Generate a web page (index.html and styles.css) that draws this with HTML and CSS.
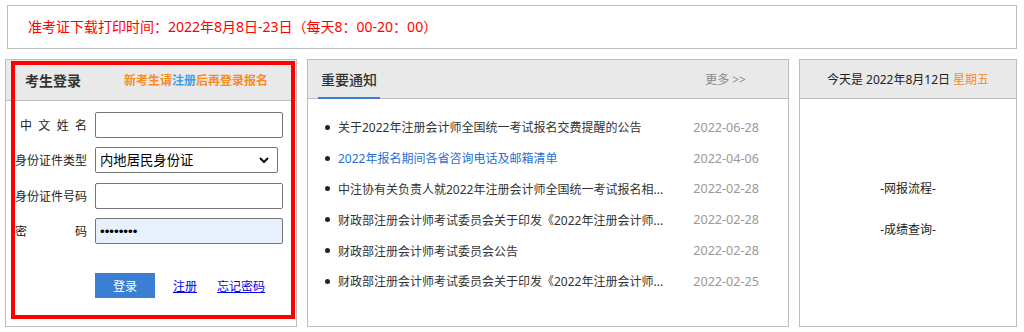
FILE: index.html
```html
<!DOCTYPE html>
<html lang="zh-CN">
<head>
<meta charset="utf-8">
<title>考生登录</title>
<link rel="stylesheet" href="styles.css">
</head>
<body>
<div class="page">
  <div class="notice-bar">准考证下载打印时间：2022年8月8日-23日（每天8：00-20：00）</div>
  <div class="panels">
    <div class="panel panel-login">
      <div class="login-head">
        <span class="login-title">考生登录</span>
        <span class="login-tip">新考生请<a class="tip-link" href="#">注册</a>后再登录报名</span>
      </div>
      <form class="login-form">
        <div class="form-row">
          <label class="form-label label-name">中文姓名</label>
          <input class="form-input" type="text">
        </div>
        <div class="form-row">
          <label class="form-label">身份证件类型</label>
          <div class="select-wrap">
            <select class="form-select"><option>内地居民身份证</option></select>
            <svg class="select-arrow" width="10" height="7" viewBox="0 0 10 7"><polyline points="1,1 5,5 9,1" fill="none" stroke="#111" stroke-width="2"/></svg>
          </div>
        </div>
        <div class="form-row">
          <label class="form-label">身份证件号码</label>
          <input class="form-input" type="text">
        </div>
        <div class="form-row">
          <label class="form-label">密码</label>
          <input class="form-input input-pass" type="password" value="12345678">
        </div>
        <div class="form-actions">
          <button class="btn-login" type="button">登录</button>
          <a class="act-link" href="#">注册</a>
          <a class="act-link" href="#">忘记密码</a>
        </div>
      </form>
      <div class="red-frame"></div>
    </div>

    <div class="panel panel-news">
      <div class="news-head">
        <span class="news-title">重要通知</span>
        <a class="news-more" href="#">更多 &gt;&gt;</a>
      </div>
      <ul class="news-list">
        <li class="news-item"><span class="news-text">关于2022年注册会计师全国统一考试报名交费提醒的公告</span><span class="news-date">2022-06-28</span></li>
        <li class="news-item"><span class="news-text news-blue">2022年报名期间各省咨询电话及邮箱清单</span><span class="news-date">2022-04-06</span></li>
        <li class="news-item"><span class="news-text">中注协有关负责人就2022年注册会计师全国统一考试报名相...</span><span class="news-date">2022-02-28</span></li>
        <li class="news-item"><span class="news-text">财政部注册会计师考试委员会关于印发《2022年注册会计师...</span><span class="news-date">2022-02-28</span></li>
        <li class="news-item"><span class="news-text">财政部注册会计师考试委员会公告</span><span class="news-date">2022-02-28</span></li>
        <li class="news-item"><span class="news-text">财政部注册会计师考试委员会关于印发《2022年注册会计师...</span><span class="news-date">2022-02-25</span></li>
      </ul>
    </div>

    <div class="panel panel-side">
      <div class="side-head">今天是 2022年8月12日 <span class="weekday">星期五</span></div>
      <div class="side-body">
        <a class="side-link" href="#">-网报流程-</a>
        <a class="side-link" href="#">-成绩查询-</a>
      </div>
    </div>
  </div>
</div>
</body>
</html>
```

FILE: styles.css
```css
* { box-sizing: border-box; }
html, body { margin: 0; padding: 0; background: #fff; }
body {
  font-family: "Noto Sans", "Noto Sans CJK SC", sans-serif;
  font-size: 12px;
  color: #333;
}
a { text-decoration: none; }

.page { padding: 5px 7px 0 5px; }

.notice-bar {
  margin-left: 2px;
  height: 44px;
  border: 1px solid #bdbdbd;
  padding-left: 20px;
  line-height: 42px;
  font-size: 14px;
  color: #f00;
}

.panels {
  display: flex;
  gap: 10px;
  margin-top: 10px;
}

.panel {
  position: relative;
  height: 268px;
  border: 1px solid #bdbdbd;
  background: #fff;
}
.panel-login { width: 292px; }
.panel-news { width: 482px; }
.panel-side { width: 218px; }

/* login */
.login-head {
  height: 41px;
  background: #e9e9e9;
  border-bottom: 1px solid #bdbdbd;
  display: flex;
  align-items: center;
  justify-content: space-between;
  padding: 0 28px 0 19px;
}
.login-title { font-size: 14px; font-weight: bold; color: #333; }
.login-tip { font-size: 12px; font-weight: bold; color: #ff8a1c; }
.tip-link { color: #3ca0ea; }

.login-form {
  padding: 11px 0 0 9px;
  display: flex;
  flex-direction: column;
  gap: 9.4px;
}
.form-row {
  display: flex;
  align-items: center;
  height: 26px;
  gap: 8px;
}
.form-label {
  width: 72px;
  font-size: 12px;
  color: #222;
  text-align: justify;
  text-align-last: justify;
}
.label-name { padding-left: 5px; }
.form-input {
  width: 188px;
  height: 26px;
  border: 1px solid #767676;
  border-radius: 2px;
  padding: 0 4px;
  font-size: 13.33px;
  background: #fff;
  outline: none;
}
.input-pass { background: #e8f0fe; letter-spacing: 0; }
.select-wrap { position: relative; width: 183px; height: 26px; }
.form-select {
  appearance: none;
  -webkit-appearance: none;
  width: 183px;
  height: 26px;
  border: 1px solid #767676;
  border-radius: 2px;
  padding: 0 20px 0 4px;
  font-family: "Noto Sans", "Noto Sans CJK SC", sans-serif;
  font-size: 13.33px;
  color: #000;
  background: #fff;
}
.select-arrow {
  position: absolute;
  right: 9px;
  top: 10px;
  pointer-events: none;
}

.form-actions {
  display: flex;
  align-items: center;
  margin-top: 19.6px;
  padding-left: 80px;
}
.btn-login {
  width: 60px;
  height: 25px;
  border: none;
  background: #3a7fd3;
  color: #fff;
  font-family: "Noto Sans", "Noto Sans CJK SC", sans-serif;
  font-size: 12px;
  padding: 0;
  margin-right: 18px;
}
.act-link {
  color: #00e;
  text-decoration: underline;
  font-size: 12px;
  margin-right: 20px;
}

.red-frame {
  position: absolute;
  top: 1px;
  left: 5px;
  right: 1px;
  bottom: 7px;
  border: 4px solid #f00;
  pointer-events: none;
}

/* news */
.news-head {
  height: 39px;
  background: #e9e9e9;
  border-bottom: 1px solid #bdbdbd;
  display: flex;
  align-items: stretch;
  justify-content: space-between;
  padding: 0 42px 0 10px;
}
.news-title {
  display: flex;
  align-items: center;
  padding: 0 3px;
  margin-bottom: -1px;
  font-size: 14px;
  font-weight: 500;
  color: #333;
  border-bottom: 2px solid #3a7bd5;
}
.news-more {
  display: flex;
  align-items: center;
  color: #888;
  font-size: 12px;
}
.news-list {
  list-style: none;
  margin: 0;
  padding: 13px 29px 0 0;
}
.news-item {
  display: flex;
  align-items: center;
  height: 30.8px;
}
.news-item::before {
  content: "";
  flex: none;
  width: 5px;
  height: 5px;
  border-radius: 50%;
  background: #222;
  margin: 0 8px 0 17px;
}
.news-text {
  flex: 1;
  min-width: 0;
  white-space: nowrap;
  overflow: hidden;
  text-overflow: ellipsis;
  color: #333;
}
.news-blue { color: #2b6fd4; }
.news-date {
  flex: none;
  margin-left: 8px;
  color: #999;
  font-size: 12.6px;
  white-space: nowrap;
}

/* side */
.side-head {
  height: 39px;
  background: #e9e9e9;
  border-bottom: 1px solid #bdbdbd;
  display: flex;
  align-items: center;
  justify-content: center;
  color: #222;
}
.weekday { color: #ff8a1c; margin-left: 3px; }
.side-body {
  display: flex;
  flex-direction: column;
  align-items: center;
  gap: 19px;
  padding-top: 79px;
}
.side-link {
  line-height: 22px;
  color: #222;
}
```
